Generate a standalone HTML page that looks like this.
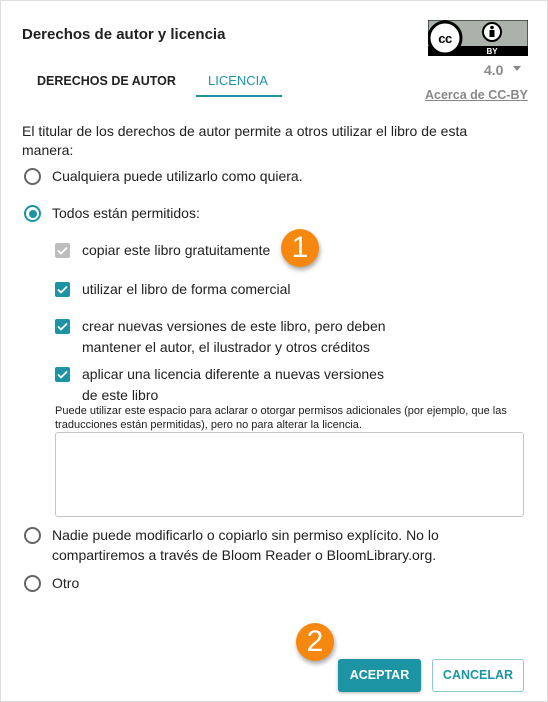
<!DOCTYPE html>
<html><head><meta charset="utf-8"><style>
*{box-sizing:border-box;margin:0;padding:0}
body{width:548px;height:702px;background:#fff;font-family:"Liberation Sans",sans-serif;color:#212121;position:relative;overflow:hidden}
.a{position:absolute;white-space:nowrap}
.t{font-size:14px;line-height:20px}
.radio{position:absolute;width:17px;height:17px;border:2px solid #666;border-radius:50%}
.radio.on{border-color:#1d94a4}
.radio.on::after{content:"";position:absolute;left:2.5px;top:2.5px;width:8px;height:8px;border-radius:50%;background:#1d94a4}
.cb{position:absolute;width:15px;height:15px;border-radius:2px;background:#1d94a4}
.cb.dis{background:#bdbdbd}
.cb svg{position:absolute;left:1px;top:1px}
.badge{position:absolute;width:38px;height:38px;border-radius:50%;background:#f7880f;color:#fff;font-size:30px;line-height:38px;text-align:center;box-shadow:1px 3px 5px rgba(0,0,0,.35)}
</style></head><body>
<div style="position:absolute;left:0;top:0;width:548px;height:702px;border:1px solid #ddd"></div>
<div class="a" style="left:22px;top:25px;font-size:15px;font-weight:bold;line-height:20px">Derechos de autor y licencia</div>
<div class="a t" style="left:37px;top:71px;font-size:12.5px;font-weight:bold;color:#222">DERECHOS DE AUTOR</div>
<div class="a t" style="left:208px;top:71px;font-size:13px;color:#1d94a4">LICENCIA</div>
<div class="a" style="left:196px;top:95px;width:86px;height:2px;background:#1d94a4"></div>

<svg class="a" style="left:428px;top:20px" width="100" height="36" viewBox="0 0 100 36">
<rect x="0" y="0" width="100" height="36" fill="#aab2ab" stroke="#000" stroke-width="1"/>
<rect x="0" y="26" width="100" height="10" fill="#000"/>
<circle cx="17" cy="18" r="16" fill="#fff" stroke="#000" stroke-width="3"/>
<text x="17" y="23" font-family="Liberation Sans" font-weight="bold" font-size="13" text-anchor="middle" letter-spacing="-0.5">cc</text>
<circle cx="64" cy="12" r="9" fill="#fff" stroke="#000" stroke-width="2"/>
<circle cx="64" cy="7.5" r="1.8" fill="#000"/>
<rect x="61.5" y="10" width="5" height="7" fill="#000"/>
<text x="64" y="34" fill="#fff" font-family="Liberation Sans" font-weight="bold" font-size="8" text-anchor="middle">BY</text>
</svg>
<div class="a t" style="left:484px;top:60px;color:#888;font-weight:bold;font-size:14px">4.0</div>
<div class="a" style="left:513px;top:66px;width:0;height:0;border-left:4px solid transparent;border-right:4px solid transparent;border-top:5px solid #888"></div>
<div class="a t" style="left:425px;top:85px;color:#888;font-weight:bold;font-size:12.5px;text-decoration:underline">Acerca de CC-BY</div>

<div class="a t" style="left:22px;top:121px">El titular de los derechos de autor permite a otros utilizar el libro de esta</div>
<div class="a t" style="left:22px;top:140px">manera:</div>

<div class="radio" style="left:24px;top:168px"></div>
<div class="a t" style="left:52px;top:166px">Cualquiera puede utilizarlo como quiera.</div>
<div class="radio on" style="left:24px;top:205px"></div>
<div class="a t" style="left:52px;top:203px">Todos están permitidos:</div>

<div class="cb dis" style="left:55px;top:243px"><svg width="13" height="13" viewBox="0 0 13 13"><path d="M2 6.5l3 3 6-6" stroke="#fff" stroke-width="1.8" fill="none"/></svg></div>
<div class="a t" style="left:82px;top:240px">copiar este libro gratuitamente</div>
<div class="cb" style="left:55px;top:282px"><svg width="13" height="13" viewBox="0 0 13 13"><path d="M2 6.5l3 3 6-6" stroke="#fff" stroke-width="1.8" fill="none"/></svg></div>
<div class="a t" style="left:82px;top:279px">utilizar el libro de forma comercial</div>
<div class="cb" style="left:55px;top:319px"><svg width="13" height="13" viewBox="0 0 13 13"><path d="M2 6.5l3 3 6-6" stroke="#fff" stroke-width="1.8" fill="none"/></svg></div>
<div class="a t" style="left:82px;top:316px">crear nuevas versiones de este libro, pero deben</div>
<div class="a t" style="left:82px;top:337px">mantener el autor, el ilustrador y otros créditos</div>
<div class="cb" style="left:55px;top:367px"><svg width="13" height="13" viewBox="0 0 13 13"><path d="M2 6.5l3 3 6-6" stroke="#fff" stroke-width="1.8" fill="none"/></svg></div>
<div class="a t" style="left:82px;top:364px">aplicar una licencia diferente a nuevas versiones</div>
<div class="a t" style="left:82px;top:385px">de este libro</div>
<div class="a" style="left:55px;top:404px;font-size:11px;line-height:14px">Puede utilizar este espacio para aclarar o otorgar permisos adicionales (por ejemplo, que las</div>
<div class="a" style="left:55px;top:418px;font-size:11px;line-height:14px">traducciones están permitidas), pero no para alterar la licencia.</div>
<div class="a" style="left:55px;top:432px;width:469px;height:85px;border:1px solid #c4c4c4;border-radius:3px"></div>

<div class="radio" style="left:24px;top:527px"></div>
<div class="a t" style="left:52px;top:525px">Nadie puede modificarlo o copiarlo sin permiso explícito. No lo</div>
<div class="a t" style="left:52px;top:545px">compartiremos a través de Bloom Reader o BloomLibrary.org.</div>
<div class="radio" style="left:24px;top:575px"></div>
<div class="a t" style="left:52px;top:573px">Otro</div>

<div class="a" style="left:338px;top:659px;width:83px;height:33px;background:#1d94a4;border-radius:3px;color:#fff;font-size:12.5px;font-weight:bold;text-align:center;line-height:33px;box-shadow:0 1px 3px rgba(0,0,0,.3)">ACEPTAR</div>
<div class="a" style="left:432px;top:659px;width:92px;height:33px;border:1px solid #8cc9d1;border-radius:3px;color:#1d94a4;font-size:12.5px;font-weight:bold;text-align:center;line-height:31px">CANCELAR</div>

<div class="badge" style="left:281px;top:229px">1</div>
<div class="badge" style="left:296px;top:623px">2</div>
</body></html>
